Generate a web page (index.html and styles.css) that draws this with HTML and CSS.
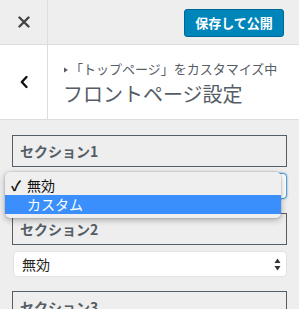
FILE: index.html
```html
<!DOCTYPE html>
<html lang="ja">
<head>
  <meta charset="UTF-8" />
  <meta name="viewport" content="width=device-width, initial-scale=1.0"/>
  <title>フロントページ設定</title>
  <link rel="stylesheet" href="styles.css">
</head>
<body>
  <div class="top-bar">
    <button class="close-btn" aria-label="閉じる">
      <svg width="12" height="12" viewBox="0 0 12 12"><path d="M1.5 1.5 L10.5 10.5 M10.5 1.5 L1.5 10.5" stroke="#444" stroke-width="2.4" stroke-linecap="round"/></svg>
    </button>
    <div class="top-actions">
      <button class="publish-btn">保存して公開</button>
    </div>
  </div>

  <div class="panel-head">
    <button class="back-btn" aria-label="戻る">
      <svg width="10" height="14" viewBox="0 0 10 14"><path d="M7.5 2 L2.8 7 L7.5 12" fill="none" stroke="#111" stroke-width="2.4" stroke-linecap="round" stroke-linejoin="round"/></svg>
    </button>
    <div class="panel-title">
      <span class="crumb"><svg class="arrow" width="6" height="6" viewBox="0 0 6 6"><path d="M1 0.5 L5 3 L1 5.5 Z" fill="#555d66"/></svg>「トップページ」をカスタマイズ中</span>
      <h2>フロントページ設定</h2>
    </div>
  </div>

  <div class="controls">
    <div class="section-label">セクション1</div>
    <div class="select focused">
      <span></span>
      <svg class="spin" width="7" height="13" viewBox="0 0 7 13"><path d="M3.5 0.5 L6.5 5 L0.5 5 Z M0.5 8 L6.5 8 L3.5 12.5 Z" fill="#333"/></svg>
    </div>

    <div class="section-label">セクション2</div>
    <div class="select">
      <span>無効</span>
      <svg class="spin" width="7" height="13" viewBox="0 0 7 13"><path d="M3.5 0.5 L6.5 5 L0.5 5 Z M0.5 8 L6.5 8 L3.5 12.5 Z" fill="#333"/></svg>
    </div>

    <div class="section-label">セクション3</div>
  </div>

  <!-- open native menu of section 1 -->
  <div class="popup-menu">
    <div class="menu-item"><span class="check">✓</span><span>無効</span></div>
    <div class="menu-item active"><span class="check"></span><span>カスタム</span></div>
  </div>
</body>
</html>
```

FILE: styles.css
```css
:root {
  --wp-blue: #0085ba;
  --wp-text: #555d66;
  --border: #ddd;
  --menu-blue: #3a8ffc;
}

body {
  font-family: "Noto Sans CJK JP", "Noto Sans", sans-serif;
  margin: 0;
  background: #eee;
  width: 299px;
  height: 309px;
  overflow: hidden;
  position: relative;
}

button {
  font-family: inherit;
}

.top-bar {
  display: flex;
  height: 44px;
  border-bottom: 1px solid var(--border);
}

.close-btn {
  width: 48px;
  border: none;
  border-right: 1px solid var(--border);
  background: none;
  display: flex;
  align-items: center;
  justify-content: center;
  padding: 0;
}

.top-actions {
  flex: 1;
  display: flex;
  justify-content: flex-end;
  align-items: flex-start;
  padding: 9px 15px 0 0;
}

.publish-btn {
  background: var(--wp-blue);
  color: #fff;
  border: 1px solid #006799;
  border-radius: 3px;
  width: 100px;
  height: 28px;
  font-size: 13px;
  font-weight: bold;
  padding: 0;
  line-height: 26px;
}

.panel-head {
  display: flex;
  background: #fff;
  height: 74px;
  border-bottom: 1px solid var(--border);
}

.back-btn {
  width: 48px;
  border: none;
  border-right: 1px solid var(--border);
  background: #fff;
  display: flex;
  align-items: center;
  justify-content: center;
  padding: 0;
}

.panel-title {
  padding: 14px 0 0 15px;
  color: var(--wp-text);
}

.crumb {
  display: block;
  font-size: 13px;
  line-height: 20px;
}

.crumb .arrow {
  margin-right: 1px;
  vertical-align: 1px;
}

.panel-title h2 {
  margin: 0;
  font-size: 20px;
  font-weight: normal;
  line-height: 30px;
}

.controls {
  padding: 15px 12px 0 12px;
}

.section-label {
  height: 30px;
  border: 1px solid var(--wp-text);
  padding-left: 7px;
  font-size: 14px;
  font-weight: bold;
  color: var(--wp-text);
  line-height: 30px;
  margin-bottom: 6px;
  overflow: hidden;
}

.select {
  margin: 0 0 14px 1px;
  height: 26px;
  background: #fff;
  border: 1px solid #e2e2e2;
  border-radius: 4px;
  box-sizing: border-box;
  display: flex;
  align-items: center;
  justify-content: space-between;
  padding: 0 5px 0 8px;
  font-size: 14px;
  color: #222;
}

.select.focused {
  border-color: #5b9dd9;
  box-shadow: 0 0 2px rgba(30, 140, 190, 0.8);
}

/* native popup menu over the first select */
.popup-menu {
  position: absolute;
  left: 5px;
  top: 172px;
  width: 276px;
  height: 46px;
  box-sizing: border-box;
  padding-top: 4px;
  background: #efefef;
  border-radius: 5px;
  box-shadow: 0 2px 6px rgba(0, 0, 0, 0.3), 0 0 0 1px rgba(0, 0, 0, 0.06);
  font-size: 14px;
  color: #111;
}

.menu-item {
  display: flex;
  height: 19px;
  line-height: 19px;
  padding-left: 6px;
}

.menu-item .check {
  width: 16px;
  font-weight: bold;
}

.menu-item.active {
  background: var(--menu-blue);
  color: #fff;
}
```
